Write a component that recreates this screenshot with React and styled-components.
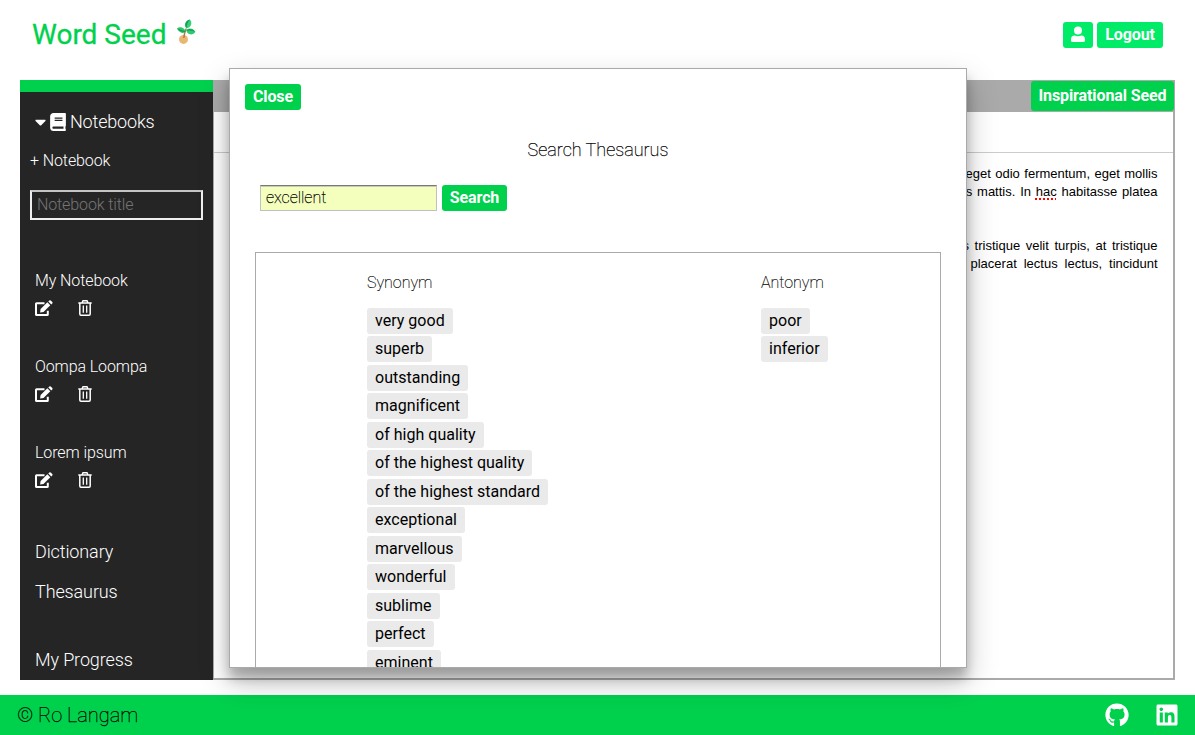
import React from "react";
import styled, { createGlobalStyle } from "styled-components";
import { FaBook, FaCaretDown, FaGithub, FaLinkedin } from "react-icons/fa";

const Global = createGlobalStyle`
  * { box-sizing: border-box; }
  body { margin: 0; background: #fff; color: #000; font: 300 18px/21px Roboto, sans-serif; overflow: hidden; }
  button, input { font-family: inherit; }
`;
const Page = styled.div`
  position: relative; height: 735px; display: flex; flex-direction: column;
`;
const Header = styled.header`
  height: 80px; flex: none; display: flex; justify-content: space-between; align-items: flex-start;
  padding: 18px 32px 0;
`;
const Logo = styled.h1`
  margin: 0; display: flex; align-items: flex-start; font-size: 28px; line-height: 33px; font-weight: 400; color: #00d14d;
  -webkit-text-stroke: 0.3px #00d14d;
  svg { margin-left: 10px; margin-top: 1px; }
`;
const Actions = styled.div`display: flex; gap: 4px; padding-top: 4px;`;
const Button = styled.button`
  height: ${(p) => p.$height || 26}px; width: ${(p) => p.$width}px; padding: 0; border: 0; border-radius: 3px; flex: none;
  display: flex; align-items: center; justify-content: center; white-space: nowrap;
  background: ${(p) => (p.$bright ? "#00eb68" : "#00d14d")}; color: #fff; font-size: 16px; line-height: 19px; font-weight: 700;
  padding-bottom: 1px; letter-spacing: -0.1px;
`;
const Main = styled.main`display: flex; height: 600px; margin: 0 20px; flex: none;`;
const Sidebar = styled.nav`
  width: 193px; flex: none; border-top: 12px solid #00d14d; background: #252525; color: #fff; padding: 19px 10px 0;
`;
const SideTitle = styled.div`
  display: flex; align-items: center; height: 21px; padding-left: 5px; font-size: 18px; letter-spacing: -0.18px;
`;
const Caret = styled(FaCaretDown)`width: 11px; height: 18px; flex: none; margin-right: 4px;`;
const Book = styled(FaBook)`width: 16px; height: 18px; flex: none; margin-right: 4px;`;
const AddNotebook = styled.div`margin-top: 18px; height: 21px; font-size: 16px; letter-spacing: -0.1px;`;
const TitleInput = styled.input`
  display: block; margin-top: 19px; width: 173px; height: 30px; padding: 0 5px 2px; background: transparent;
  border: 2px solid #eee; border-top-color: #c4c4c4;
  font-size: 16px; font-weight: 300; color: #fff; letter-spacing: -0.12px;
  &::placeholder { color: #757575; opacity: 1; }
`;
const Notebooks = styled.div`padding: 50px 5px 0; height: 321px;`;
const Notebook = styled.div`height: 86px; font-size: 16px; letter-spacing: -0.1px;`;
const NotebookIcons = styled.div`display: flex; align-items: flex-start; gap: 25px; margin-top: 9px;`;
const SideLink = styled.div`height: 21px; margin: 0 5px ${(p) => p.$gap}px; font-size: 18px; letter-spacing: -0.12px;`;
const Editor = styled.section`
  flex: 1; display: flex; flex-direction: column; border: 1px solid #aaa; border-width: 1px 2px 2px 1px; border-color: #aaa;
`;
const Toolbar = styled.div`
  height: 31px; flex: none; display: flex; justify-content: flex-end; background: #aaa; border-bottom: 1px solid #aaa;
  margin-right: -1px;
`;
const TitleBar = styled.div`height: 41px; flex: none; border-bottom: 1px solid #ccc;`;
const Prose = styled.div`
  padding: 12px 15.5px; font: 13px/18px "Liberation Sans", sans-serif; white-space: nowrap;
`;
const Line = styled.div`height: 18px; margin-left: auto; width: ${(p) => p.$width}px; text-align: justify; text-align-last: justify;`;
const Gap = styled.div`height: 36px;`;
const Misspelled = styled.span`text-decoration: underline dotted #f00 2px; text-underline-offset: 2px;`;
const Modal = styled.section`
  position: absolute; left: 229px; top: 68px; width: 738px; height: 600px; overflow: hidden; background: #fff;
  border: 1px solid #aaa; padding: 15px; z-index: 2; font-weight: 250;
  box-shadow: 0 14px 28px rgba(0, 0, 0, 0.25), 0 10px 10px rgba(0, 0, 0, 0.22);
`;
const ModalTitle = styled.h2`
  margin: 29px 0 25px; text-align: center; font-size: 18px; line-height: 21px; font-weight: 250;
  -webkit-text-stroke: 0.25px #000;
`;
const SearchRow = styled.div`display: flex; gap: 5px; padding-left: 15px;`;
const SearchInput = styled.input`
  width: 177px; height: 26px; padding: 0 5px 1px; background: #f5ffbd; font-size: 16px; font-weight: 250; color: #000;
  border: 1px solid #c0c0c0; border-top: 1px solid #777; box-shadow: inset 0 1px 0 #c9cdb0;
  -webkit-text-stroke: 0.25px #000;
`;
const Results = styled.div`
  display: flex; margin: 41px 10px 0; height: 500px; border: 1px solid #aaa; padding: 20px 0 0 111px;
`;
const Column = styled.div`
  width: ${(p) => p.$width}px; display: flex; flex-direction: column; align-items: flex-start; gap: 2.48px;
`;
const ColumnTitle = styled.div`
  height: 21px; font-size: 16px; line-height: 20px; margin-bottom: 11.5px; -webkit-text-stroke: 0.2px #000;
`;
const Word = styled.button`
  flex: none; height: 26px; padding: 0 8px 1px; border: 0; border-radius: 3px; background: #eaeaea; color: #000;
  font-size: 16px; line-height: 19px; font-weight: 400; white-space: nowrap; letter-spacing: 0.02px;
`;
const Footer = styled.footer`
  height: 40px; flex: none; margin-top: 15px; padding: 0 16px 0 17px; display: flex; align-items: center; justify-content: space-between;
  background: #00d14d; font-size: 20px; line-height: 24px; font-weight: 250;
`;
const Copyright = styled.span`-webkit-text-stroke: 0.25px #000;`;
const Social = styled.div`display: flex; align-items: center; gap: 26px; color: #fff;`;

const Seedling = () => (
  <svg width="21" height="27" viewBox="0 0 21 27">
    <circle cx="7.5" cy="20.4" r="4.5" fill="#e8b873" />
    <path d="M7.8 19Q8.2 14 10.3 9.5" fill="none" stroke="#b8774a" strokeWidth="1.5" />
    <path d="M9.7 12.6C8 15.4 3 14 1 9.6C3.6 6.8 8.8 8.2 9.7 12.6Z" fill="#2cc66c" />
    <path d="M10.4 9.2C7.4 6.6 9.2 1.6 13.8 .4C17 3.4 14.8 9 10.4 9.2Z" fill="#33d077" />
    <path d="M10.2 11.6C12 8.2 17.4 9 19.4 12.8C17 16.8 11.6 16.2 10.2 11.6Z" fill="#2ccb6f" />
    <path d="M10.4 9Q10.8 4 13.8 .6Q10.2 1.6 9.4 5Q9.2 7.8 10.4 9M9.7 12.4Q6 11.4 1 9.6Q3.4 12.4 6.4 12.8Q8.8 13.2 9.7 12.4M10.2 11.6Q14 11.2 19.4 12.8Q17 10.2 13.8 10.1Q11 10.2 10.2 11.6" fill="#169c58" />
  </svg>
);
const User = () => (
  <svg width="16" height="17" viewBox="0 0 16 17" fill="#fff">
    <circle cx="8" cy="4.6" r="4" />
    <path d="M1 14.6V13.5Q1 9.8 4.7 9.6Q8 11.1 11.3 9.6Q15 9.8 15 13.5V14.6Q15 16.1 13.5 16.1H2.5Q1 16.1 1 14.6Z" />
  </svg>
);
const Edit = () => (
  <svg width="18" height="17" viewBox="0 0 18 17" fill="#fff">
    <path d="M9.5 3.2H1.6Q1 3.2 1 3.8V14.4Q1 15 1.6 15H12.2Q12.8 15 12.8 14.4V10.8" fill="none" stroke="#fff" strokeWidth="2" />
    <path d="M5.1 12.5L5.6 9.1L12.4 2.3L15.3 5.2L8.5 12Z" />
    <path d="M13.3 1.4L14.3 .5Q15 0 15.7 .6L17.3 2.1Q17.9 2.8 17.3 3.4L16.3 4.4Z" />
  </svg>
);
const Trash = () => (
  <svg width="14" height="16" viewBox="0 0 14 16" fill="none" stroke="#fff">
    <path d="M4.2 2.5L5 .8H9L9.8 2.5M.3 3H13.7M1.8 3V14Q1.8 15.2 3 15.2H11Q12.2 15.2 12.2 14V3" strokeWidth="1.5" />
    <path d="M5.3 5.5V12.7M8.7 5.5V12.7" strokeWidth="1.3" />
  </svg>
);

const notebooks = ["My Notebook", "Oompa Loompa", "Lorem ipsum"];
const synonyms = ["very good", "superb", "outstanding", "magnificent", "of high quality", "of the highest quality",
  "of the highest standard", "exceptional", "marvellous", "wonderful", "sublime", "perfect", "eminent"];
const antonyms = ["poor", "inferior"];

export default function App() {
  return (
    <Page>
      <Global />
      <Header>
        <Logo>Word Seed<Seedling /></Logo>
        <Actions>
          <Button $bright $width={30} aria-label="Profile"><User /></Button>
          <Button $bright $width={66}>Logout</Button>
        </Actions>
      </Header>
      <Main>
        <Sidebar>
          <SideTitle><Caret /><Book />Notebooks</SideTitle>
          <AddNotebook>+ Notebook</AddNotebook>
          <TitleInput placeholder="Notebook title" />
          <Notebooks>
            {notebooks.map((n) => (
              <Notebook key={n}>{n}<NotebookIcons><Edit /><Trash /></NotebookIcons></Notebook>
            ))}
          </Notebooks>
          <SideLink $gap={19}>Dictionary</SideLink>
          <SideLink $gap={47}>Thesaurus</SideLink>
          <SideLink $gap={0}>My Progress</SideLink>
        </Sidebar>
        <Editor>
          <Toolbar><Button $width={143} $height={30}>Inspirational Seed</Button></Toolbar>
          <TitleBar />
          <Prose>
            <Line $width={192}>eget odio fermentum, eget mollis</Line>
            <Line $width={199}>us mattis. In <Misspelled>hac</Misspelled> habitasse platea</Line>
            <Gap />
            <Line $width={195}>s tristique velit turpis, at tristique</Line>
            <Line $width={187}>placerat lectus lectus, tincidunt</Line>
          </Prose>
        </Editor>
      </Main>
      <Footer><Copyright>© Ro Langam</Copyright><Social><FaGithub size={24} /><FaLinkedin size={24} /></Social></Footer>
      <Modal>
        <Button $width={56}>Close</Button>
        <ModalTitle>Search Thesaurus</ModalTitle>
        <SearchRow><SearchInput defaultValue="excellent" /><Button $width={65}>Search</Button></SearchRow>
        <Results>
          <Column $width={394}>
            <ColumnTitle>Synonym</ColumnTitle>
            {synonyms.map((w) => <Word key={w}>{w}</Word>)}
          </Column>
          <Column $width={150}>
            <ColumnTitle>Antonym</ColumnTitle>
            {antonyms.map((w) => <Word key={w}>{w}</Word>)}
          </Column>
        </Results>
      </Modal>
    </Page>
  );
}
